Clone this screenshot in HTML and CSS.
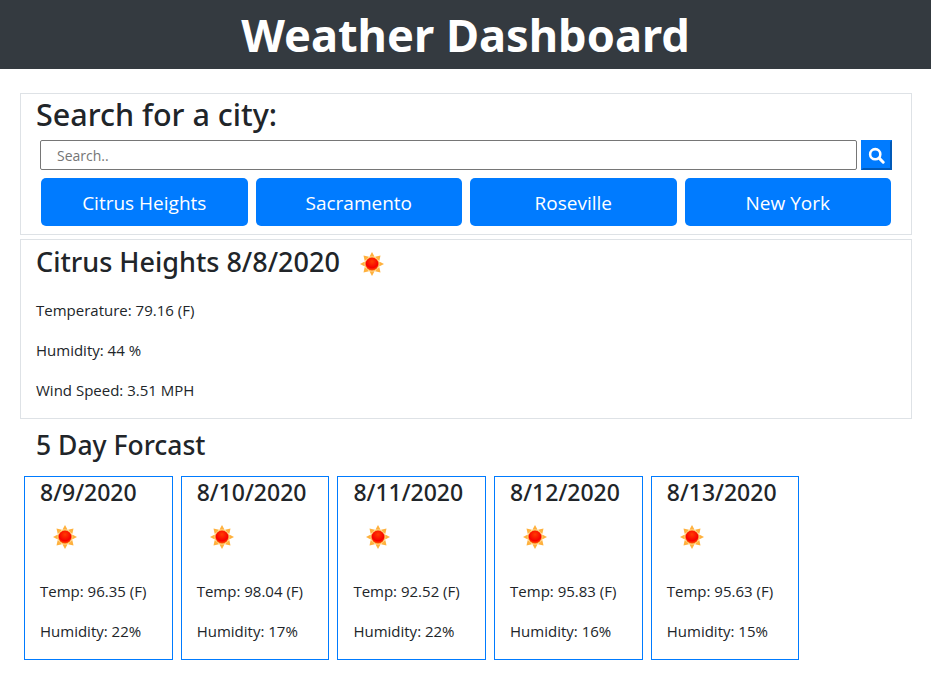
FILE: index.html
```html
<!DOCTYPE html>
<html lang="en">
<head>
<meta charset="utf-8">
<title>Weather Dashboard</title>
<link rel="stylesheet" href="styles.css">
</head>
<body>
<svg class="defs" width="0" height="0" aria-hidden="true">
  <defs>
    <radialGradient id="sunfill" cx="50%" cy="30%" r="70%">
      <stop offset="0" stop-color="#ff3c00"/>
      <stop offset="0.7" stop-color="#f60000"/>
      <stop offset="1" stop-color="#ff5a00"/>
    </radialGradient>
    <symbol id="sun" viewBox="0 0 50 50">
      <g fill="#ffb13d">
        <path d="M25 13l-2.600 4.800h5.200z"/>
        <path d="M25 37l-2.600-4.800h5.200z"/>
        <path d="M13 25l4.800-2.600v5.200z"/>
        <path d="M37 25l-4.800-2.600v5.200z"/>
        <path d="M16.500 16.500l5.500 1.200-4.300 4.300z"/>
        <path d="M33.500 16.500l-5.500 1.200 4.300 4.300z"/>
        <path d="M16.500 33.500l5.500-1.200-4.300-4.300z"/>
        <path d="M33.500 33.500l-5.500-1.200 4.300-4.300z"/>
      </g>
      <circle cx="25" cy="25" r="7.500" fill="#ffc766"/>
      <circle cx="25" cy="25" r="6.500" fill="url(#sunfill)"/>
    </symbol>
  </defs>
</svg>
<header class="banner"><h1>Weather Dashboard</h1></header>
<main class="page">
  <section class="panel search">
    <h2 class="search-title">Search for a city:</h2>
    <form class="search-form">
      <input class="search-input" type="text" placeholder="Search..">
      <button class="search-button" type="button" aria-label="Search">
        <svg viewBox="0 0 16 16" width="17" height="17"><circle cx="6.800" cy="6.800" r="4.800" fill="none" stroke="#fff" stroke-width="2.400"/><path d="M10.500 10.500l3.800 3.800" stroke="#fff" stroke-width="2.800" stroke-linecap="round"/></svg>
      </button>
    </form>
    <div class="cities">
      <button class="city" type="button">Citrus Heights</button>
      <button class="city" type="button">Sacramento</button>
      <button class="city" type="button">Roseville</button>
      <button class="city" type="button">New York</button>
    </div>
  </section>
  <section class="panel today">
    <h3 class="today-title">Citrus Heights 8/8/2020 <svg class="sun sun-today"><use href="#sun"/></svg></h3>
    <p>Temperature: 79.16 (F)</p>
    <p>Humidity: 44 %</p>
    <p>Wind Speed: 3.51 MPH</p>
  </section>
  <h3 class="forecast-title">5 Day Forcast</h3>
  <div class="forecast">
    <article class="day"><h4>8/9/2020</h4><svg class="sun"><use href="#sun"/></svg><p>Temp: 96.35 (F)</p><p>Humidity: 22%</p></article>
    <article class="day"><h4>8/10/2020</h4><svg class="sun"><use href="#sun"/></svg><p>Temp: 98.04 (F)</p><p>Humidity: 17%</p></article>
    <article class="day"><h4>8/11/2020</h4><svg class="sun"><use href="#sun"/></svg><p>Temp: 92.52 (F)</p><p>Humidity: 22%</p></article>
    <article class="day"><h4>8/12/2020</h4><svg class="sun"><use href="#sun"/></svg><p>Temp: 95.83 (F)</p><p>Humidity: 16%</p></article>
    <article class="day"><h4>8/13/2020</h4><svg class="sun"><use href="#sun"/></svg><p>Temp: 95.63 (F)</p><p>Humidity: 15%</p></article>
  </div>
</main>
</body>
</html>
```
FILE: styles.css
```css
* { box-sizing: border-box; }
html, body { margin: 0; padding: 0; }
body {
  background: #fff;
  color: #212529;
  font-family: "Open Sans", "Noto Sans", sans-serif;
  font-size: 15px;
  line-height: 24px;
}
h1, h2, h3, h4, p { margin: 0; font-family: "Noto Sans", "Open Sans", sans-serif; font-weight: 500; }
p { font-family: "Open Sans", "Noto Sans", sans-serif; font-weight: 400; }
.defs { position: absolute; }
.banner { background: #343a40; height: 69px; text-align: center; }
.banner h1 { color: #fff; font-size: 45.2px; font-weight: 700; line-height: 69px; }
.page { padding: 24px 19px 0 20px; }
.panel { border: 1px solid #dee2e6; padding: 0 15px; }
.search { height: 142px; }
.search-title { font-size: 30.5px; line-height: 41px; }
.search-form { display: flex; gap: 4px; margin: 5px 4px 0; }
.search-input {
  flex: 1;
  height: 30px;
  padding: 0 16px;
  border: 1px solid #767676;
  border-radius: 2px;
  font: inherit;
  font-size: 14px;
  color: #495057;
}
.search-input::placeholder { color: #757575; opacity: 1; }
.search-button {
  display: flex;
  width: 31px;
  height: 30px;
  align-items: center;
  justify-content: center;
  padding: 0;
  background: #007bff;
  border: 2px solid;
  border-color: #007bff #0059b8 #0059b8 #007bff;
}
.cities { display: flex; gap: 8px; margin: 8px 5px 0; }
.city {
  flex: 1;
  height: 48px;
  padding: 1px 0 0;
  border: 0;
  border-radius: 5px;
  background: #007bff;
  color: #fff;
  font: inherit;
  font-size: 19px;
}
.today { height: 180px; margin-top: 4px; }
.today-title { display: flex; align-items: center; gap: 7px; font-size: 27px; line-height: 44px; height: 44px; margin-bottom: 14px; }
.today-title .sun { margin-bottom: -4px; }
.today p { margin-bottom: 16px; }
.sun { display: block; width: 50px; height: 50px; }
.sun-today { flex: none; }
.forecast-title { font-size: 26.5px; line-height: 40px; margin: 6px 0 0 16px; }
.forecast { display: flex; gap: 8.2px; margin: 11px 0 0 4px; }
.day { width: 148.5px; height: 184px; padding: 0 15px; border: 1px solid #007bff; }
.day h4 { font-size: 23px; line-height: 31px; }
.day .sun { margin: 4px 0 17px; }
.day p { margin-bottom: 16px; }
```
